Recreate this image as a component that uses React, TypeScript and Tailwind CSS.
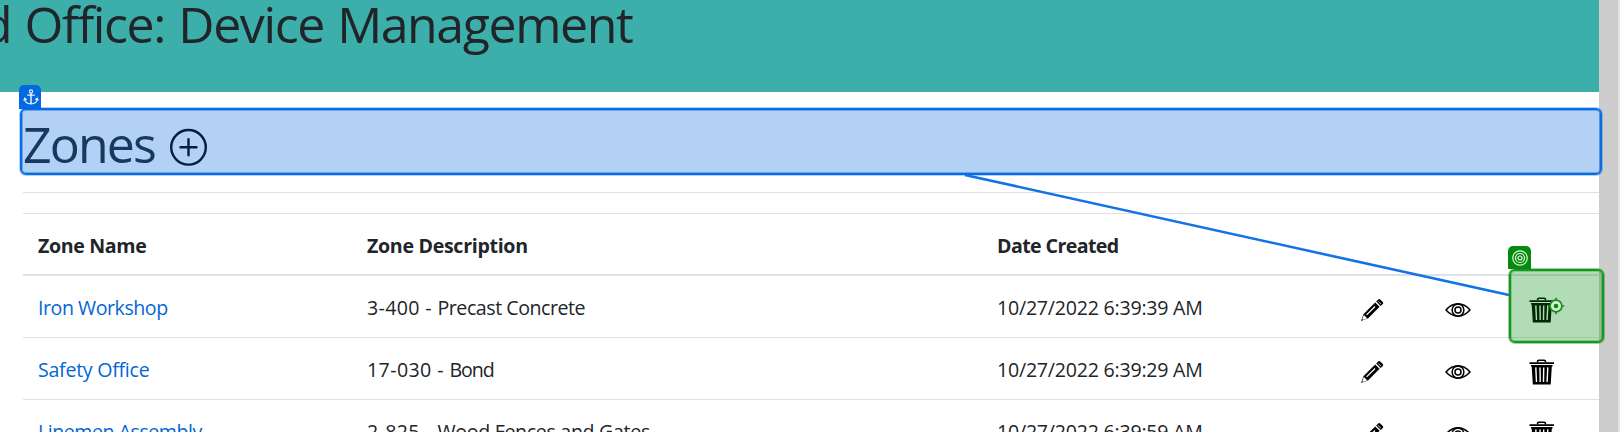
type Zone = {
  name: string;
  nameTracking: string;
  code: string;
  description: string;
  codeTracking: string;
  descriptionTracking: string;
  created: string;
};

const zones: Zone[] = [
  {
    name: "Iron Workshop",
    nameTracking: "tracking-[-0.46px]",
    code: "3-400 - ",
    codeTracking: "tracking-[0.36px]",
    description: "Precast Concrete",
    descriptionTracking: "tracking-[-0.46px]",
    created: "10/27/2022 6:39:39 AM",
  },
  {
    name: "Safety Office",
    nameTracking: "tracking-[-0.27px]",
    code: "17-030 - ",
    codeTracking: "tracking-[0.4px]",
    description: "Bond",
    descriptionTracking: "tracking-[-1px]",
    created: "10/27/2022 6:39:29 AM",
  },
  {
    name: "Linemen Assembly",
    nameTracking: "tracking-[-0.47px]",
    code: "2-825 - ",
    codeTracking: "tracking-[0.36px]",
    description: "Wood Fences and Gates",
    descriptionTracking: "tracking-[-0.32px]",
    created: "10/27/2022 6:39:59 AM",
  },
];

const columns = "grid grid-cols-[329px_630px_341px_85px_84px_107px]";

function PlusCircle() {
  return (
    <svg className="mt-[14px] size-[38px] shrink-0" viewBox="0 0 38 38" fill="none" stroke="#000" strokeWidth="2.4">
      <circle cx="19.5" cy="19.3" r="17.3" />
      <path d="M19.5 11.300v16M11.500 19.300h16" strokeLinecap="round" />
    </svg>
  );
}

function Pencil() {
  return (
    <svg className="h-6 w-6" viewBox="0 0 24 24">
      <path d="M15.2 4.4 19.6 8.8 8.2 20.2 1 23l2.6-7z" fill="#000" />
      <path d="m16.2 3.4 2-2q1-1 2 0l2.6 2.6q1 1 0 2l-2.1 2z" fill="#000" />
      <path d="M6.6 16.9 15 8.5" stroke="#fff" strokeWidth="1.3" />
      <path d="m3.9 17.1 3.3 3.2-4.2 1.6-.7-.8z" fill="#fff" />
      <path d="m18.2 3.4 2.6 2.6" stroke="#fff" strokeWidth=".8" />
    </svg>
  );
}

function Eye() {
  return (
    <svg className="h-[14px] w-[26px]" viewBox="0 0 26 14" fill="none" stroke="#000" strokeWidth="1.5">
      <path d="M1 7Q6.500 .8 13 .8T25 7Q19.500 13.200 13 13.200T1 7Z" />
      <circle cx="13" cy="7" r="5.900" />
      <circle cx="13" cy="7" r="3" />
    </svg>
  );
}

function Trash() {
  return (
    <svg className="h-[26px] w-[26px]" viewBox="0 0 26 26">
      <path d="M8.600 3.200V2.200Q8.600 1.200 9.800 1.200h5.400q1.200 0 1.200 1v1" fill="none" stroke="#000" strokeWidth="1.600" />
      <path d="M.5 3.200h24.500v1.700H.5zM2 5.900h21.500v1.500h-.7L21.700 25.500H3.800L2.700 7.400H2z" fill="#000" />
      <path d="m6.800 8.400.7 14.600M11 8.400l.2 14.600M14.700 8.400l-.2 14.600M18.800 8.400l-.7 14.600" stroke="#fff" strokeWidth="1.400" />
    </svg>
  );
}

function ZoneRow({ zone }: { zone: Zone }) {
  return (
    <div className={`${columns} h-[62px] border-b border-[#dee2e6] pt-[17px] leading-[30px]`}>
      <a className={`pl-[15px] text-[#0366d6] ${zone.nameTracking}`}>{zone.name}</a>
      <div className="pl-[15px]">
        <span className={zone.codeTracking}>{zone.code}</span>
        <span className={zone.descriptionTracking}>{zone.description}</span>
      </div>
      <span className="pl-[15px] tracking-[-0.23px]">{zone.created}</span>
      <div className="flex h-[34px] items-center pl-[37px]">
        <Pencil />
      </div>
      <div className="flex h-[34px] items-center pl-[36.5px]">
        <Eye />
      </div>
      <div className="flex h-[34px] items-center pl-[37px]">
        <Trash />
      </div>
    </div>
  );
}

function Anchor() {
  return (
    <svg className="h-4 w-4" viewBox="0 0 16 16" fill="none" stroke="#fff" strokeOpacity=".9" strokeWidth="1.200">
      <circle cx="8" cy="2.400" r="1.600" />
      <path d="M8 4v11" strokeWidth="1.500" />
      <path d="M4.200 6.200h7.600M1.600 9.500Q2 14.800 8 14.800T14.400 9.500M.8 11.600l.9-2.400 2 1.600M15.200 11.600l-.9-2.400-2 1.600" />
    </svg>
  );
}

function Bullseye() {
  return (
    <svg className="h-4 w-4" viewBox="0 0 16 16" fill="none" stroke="#fff" strokeOpacity=".9" strokeWidth="1.200">
      <circle cx="8" cy="8" r="7.200" />
      <circle cx="8" cy="8" r="4.500" />
      <circle cx="8" cy="8" r="2" />
    </svg>
  );
}

function SelectionOverlay() {
  return (
    <>
      <div className="absolute top-[108px] left-[20px] h-[67px] w-[1582px] rounded-[6px] border-2 border-[#0a6ce4] bg-[#0068e1]/30 bg-clip-padding shadow-[0_0_0_1px_rgba(3,105,227,0.3),inset_0_0_0_1px_rgba(3,105,227,0.4)]" />
      <div className="absolute top-[85px] left-[19px] flex h-[24px] w-[22px] items-center justify-center rounded-t-[5px] bg-[#0369e3] pl-px">
        <Anchor />
      </div>
      <svg className="absolute top-0 left-0 h-[432px] w-[1620px]" viewBox="0 0 1620 432">
        <path d="M965 175 1509 295" stroke="#1272e6" strokeWidth="2.600" />
      </svg>
      <div className="absolute top-[269px] left-[1509px] h-[74px] w-[95px] rounded-[6px] border-2 border-[#189420] bg-[#008c0a]/30 bg-clip-padding shadow-[0_0_0_1px_rgba(5,139,12,0.4),inset_0_0_0_1px_rgba(5,139,12,0.25)]" />
      <div className="absolute top-[246px] left-[1508px] flex h-[23px] w-[23px] items-center justify-center rounded-t-[5px] bg-[#058b0c]">
        <Bullseye />
      </div>
      <svg className="absolute top-[297px] left-[1547px] h-[18px] w-[18px]" viewBox="0 0 18 18">
        <circle cx="9" cy="9" r="5.900" fill="#d9eed9" stroke="#16911c" strokeWidth="1.800" />
        <circle cx="9" cy="9" r="2.300" fill="#078b0e" />
        <path d="M9 .8v3M9 14.200v3M.8 9h3M14.200 9h3" stroke="#16911c" strokeWidth="1.700" />
      </svg>
    </>
  );
}

export default function App() {
  return (
    <div className="relative flex h-[432px] w-[1620px] overflow-hidden bg-white font-['Open_Sans','Noto_Sans',sans-serif] text-[19.6px] text-[#212529]">
      <main className="w-[1599px] shrink-0">
        <header className="h-[92px] overflow-hidden bg-[#3cafaa]">
          <h1 className="-ml-[18px] text-[50px] leading-[48px] tracking-[-1.4px] whitespace-nowrap [word-spacing:1.7px]">d Office: Device Management</h1>
        </header>
        <section className="pl-[23px]">
          <div className="flex h-[100px] gap-4 pt-[22px]">
            <h2 className="mr-[3px] w-[127px] text-[50px] leading-[60px] tracking-[-1.85px]">Zones</h2>
            <PlusCircle />
          </div>
          <hr className="mb-5 border-t border-[#e0e0e0]" />
          <div className={`${columns} h-[63px] border-t border-b-2 border-t-[#dee2e6] border-b-[#dee2e6] pt-[17px] leading-[30px] font-bold`}>
            <span className="pl-[15px] tracking-[-0.35px]">Zone Name</span>
            <span className="pl-[15px] tracking-[-0.31px]">Zone Description</span>
            <span className="pl-[15px] tracking-[-0.6px]">Date Created</span>
          </div>
          {zones.map((zone) => (
            <ZoneRow key={zone.name} zone={zone} />
          ))}
        </section>
      </main>
      <div className="w-[19px] shrink-0 bg-[#cdcdcd]" />
      <div className="w-[2px] shrink-0 bg-[#e2e2e2]" />
      <SelectionOverlay />
    </div>
  );
}
